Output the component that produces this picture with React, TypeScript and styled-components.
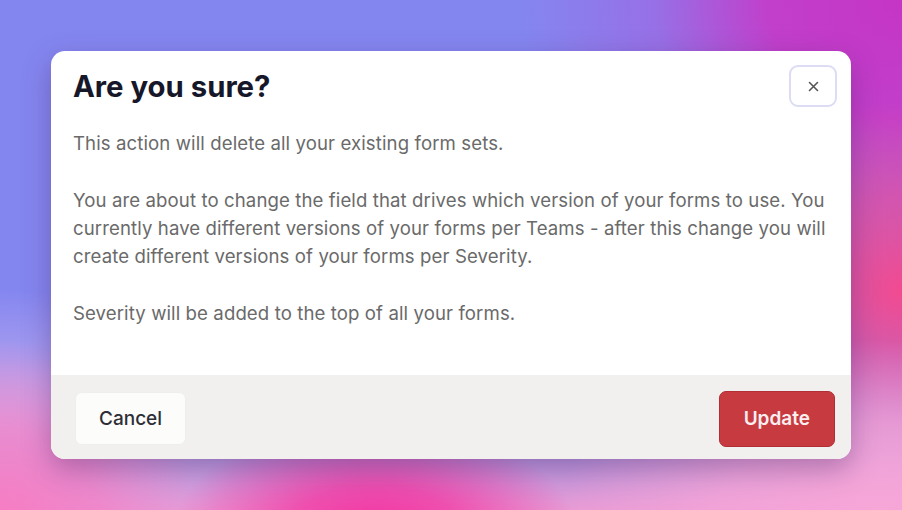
import React from "react";
import styled, { createGlobalStyle } from "styled-components";

const Global = createGlobalStyle`
  html, body { margin: 0; padding: 0; }
  body { font-family: Inter, "Noto Sans", sans-serif; }
  * { box-sizing: border-box; }
`;

const Backdrop = styled.div`
  width: 902px;
  height: 510px;
  overflow: hidden;
  display: flex;
  align-items: flex-start;
  justify-content: center;
  padding-top: 51px;
  background:
    radial-gradient(ellipse 200px 100px at 375px 525px, #f236a2 0%, rgba(242,54,162,0.75) 40%, rgba(242,54,162,0) 100%),
    radial-gradient(ellipse 320px 170px at 880px 510px, #f7a6d8 0%, rgba(247,166,216,0.7) 50%, rgba(247,166,216,0) 100%),
    radial-gradient(ellipse 200px 180px at 0px 520px, #f77cc3 0%, rgba(247,124,195,0.7) 50%, rgba(247,124,195,0) 100%),
    radial-gradient(ellipse 200px 190px at 902px 290px, #f24a90 0%, rgba(242,74,144,0.6) 50%, rgba(242,74,144,0) 100%),
    radial-gradient(ellipse 380px 340px at 902px 0px, #c535c6 0%, #c13fcb 35%, rgba(170,90,220,0.5) 65%, rgba(140,130,235,0) 100%),
    radial-gradient(ellipse 260px 140px at 0px 430px, #cab3ee 0%, rgba(202,179,238,0) 100%),
    linear-gradient(180deg, #8486f0 0%, #8486f0 70%, #b09ae6 88%, #e89ad4 100%);
`;

const Dialog = styled.div`
  width: 800px;
  height: 408px;
  background: #ffffff;
  border-radius: 14px;
  overflow: hidden;
  display: flex;
  flex-direction: column;
  box-shadow: 0 10px 28px rgba(70, 25, 90, 0.35);
`;

const Header = styled.div`
  display: flex;
  align-items: flex-start;
  justify-content: space-between;
  padding: 14px 14px 0 22px;
`;

const Title = styled.h2`
  margin: 4px 0 0;
  font-family: Inter, "Noto Sans", sans-serif;
  font-size: 29.3px;
  line-height: 36px;
  font-weight: 700;
  color: #17172a;
`;

const CloseButton = styled.button`
  width: 48px;
  height: 42px;
  border-radius: 9px;
  border: 2px solid #dcdcf4;
  background: #ffffff;
  display: flex;
  align-items: center;
  justify-content: center;
  padding: 0;
  cursor: pointer;
`;

const Body = styled.div`
  flex: 1;
  padding: 22px 22px 0 22px;
`;

const Paragraph = styled.p`
  margin: 0 0 29px;
  font-family: Inter, "Noto Sans", sans-serif;
  font-size: 18.6px;
  line-height: 28px;
  letter-spacing: 0.1px;
  color: #6a6a6a;
`;

const Footer = styled.div`
  height: 84px;
  background: #f1f0ee;
  display: flex;
  align-items: center;
  justify-content: space-between;
  padding: 3px 16px 0 24px;
`;

const Button = styled.button<{ $primary?: boolean }>`
  height: ${(p) => (p.$primary ? "56px" : "53px")};
  padding: 0 ${(p) => (p.$primary ? "24px" : "23px")};
  border-radius: 7px;
  font-family: Inter, "Noto Sans", sans-serif;
  font-size: 19px;
  font-weight: ${(p) => (p.$primary ? 600 : 500)};
  color: ${(p) => (p.$primary ? "#fbeef0" : "#2e2e36")};
  background: ${(p) => (p.$primary ? "#c73a40" : "#fcfcfb")};
  border: 1px solid ${(p) => (p.$primary ? "#b02f35" : "#eeeeec")};
  cursor: pointer;
`;

export default function App() {
  return (
    <>
      <Global />
      <Backdrop>
        <Dialog>
          <Header>
            <Title>Are you sure?</Title>
            <CloseButton aria-label="Close">
              <svg width="11" height="11" viewBox="0 0 11 11" fill="none">
                <path d="M1.5 1.5L9.5 9.5M9.5 1.5L1.5 9.5" stroke="#555" strokeWidth="1.6" strokeLinecap="round" />
              </svg>
            </CloseButton>
          </Header>
          <Body>
            <Paragraph>This action will delete all your existing form sets.</Paragraph>
            <Paragraph>
              You are about to change the field that drives which version of your forms to use. You
              currently have different versions of your forms per Teams - after this change you will
              create different versions of your forms per Severity.
            </Paragraph>
            <Paragraph>Severity will be added to the top of all your forms.</Paragraph>
          </Body>
          <Footer>
            <Button>Cancel</Button>
            <Button $primary>Update</Button>
          </Footer>
        </Dialog>
      </Backdrop>
    </>
  );
}
